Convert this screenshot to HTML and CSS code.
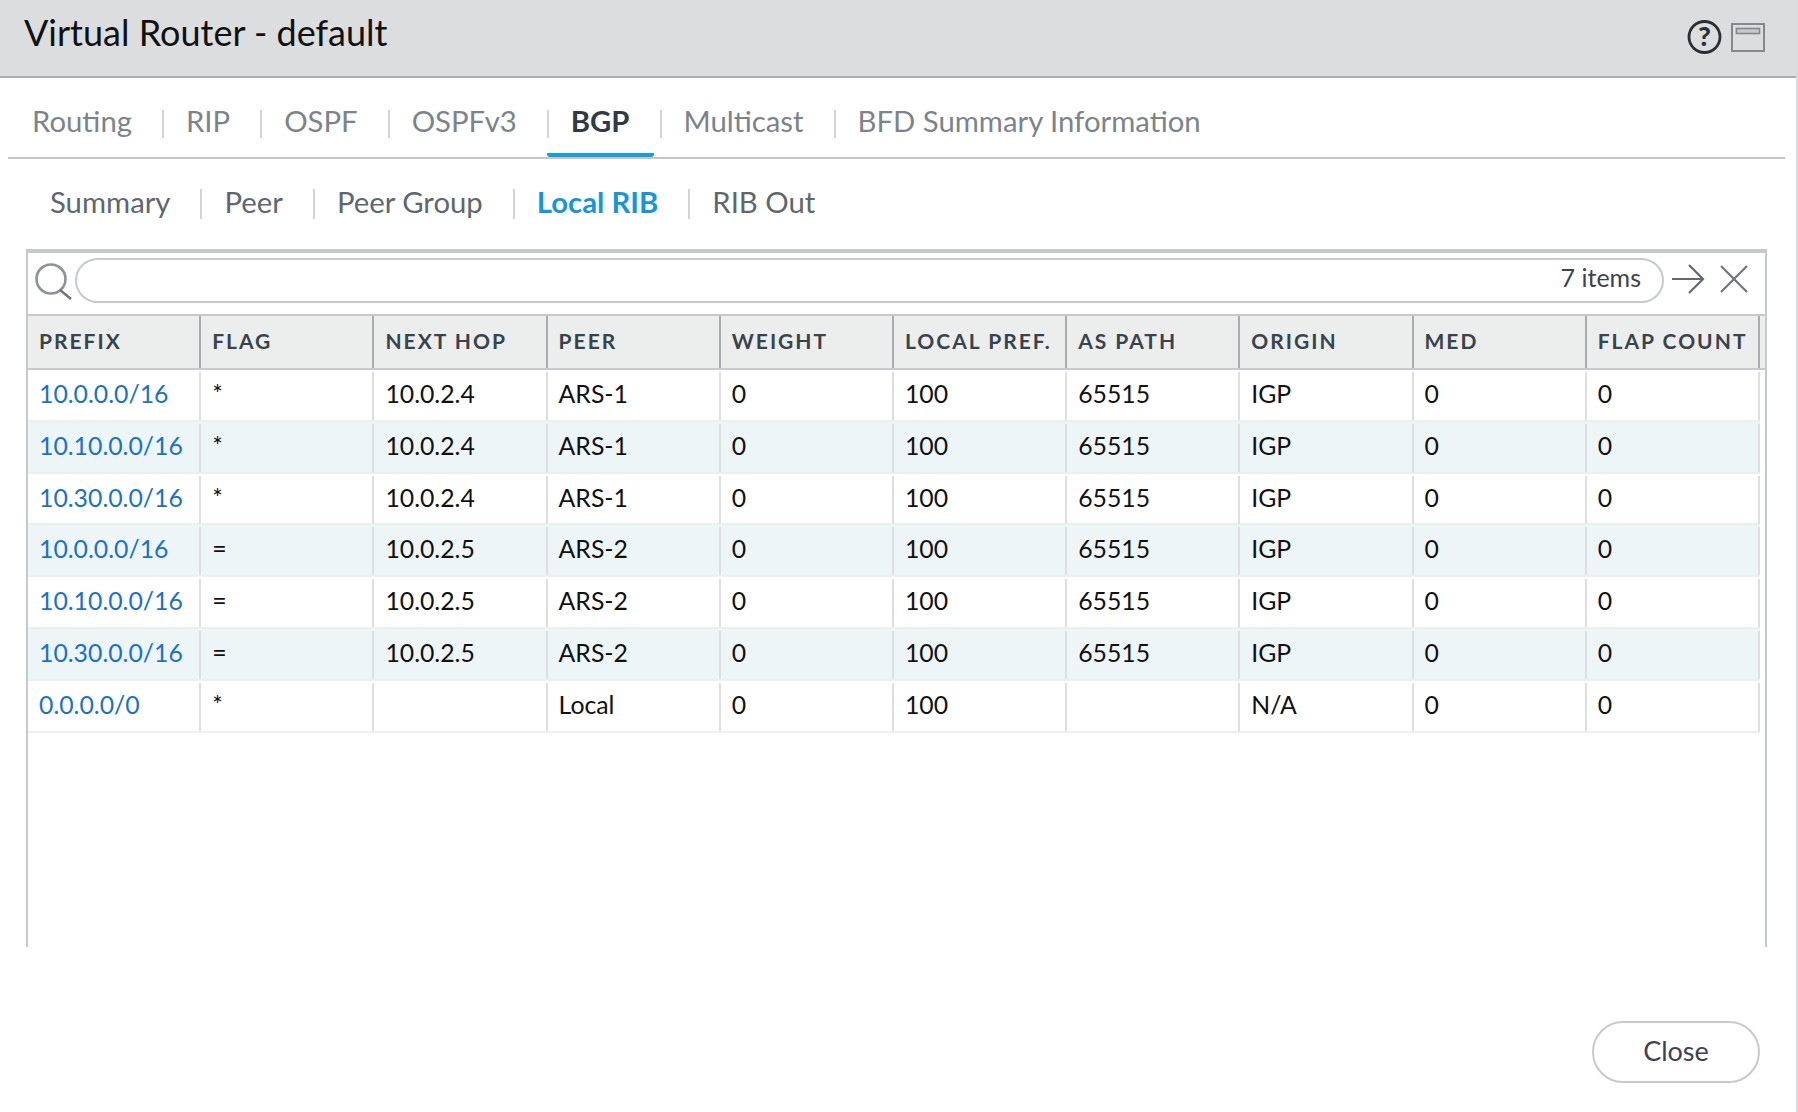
FILE: index.html
```html
<!DOCTYPE html>
<html>
<head>
    <meta charset="utf-8" />
    <title>Virtual Router - default</title>
    <link rel="stylesheet" href="styles.css">
</head>
<body>
    <div class="dialog">
        <div class="titlebar">
            <h1>Virtual Router - default</h1>
            <div class="title-icons">
                <svg width="35" height="34" viewBox="0 0 35 34">
                    <circle cx="17.500" cy="17" r="15.500" fill="#dcdddf" stroke="#2b2f33" stroke-width="2.800"/>
                    <text x="17.500" y="26" text-anchor="middle" class="help-mark">?</text>
                </svg>
                <svg width="34" height="29" viewBox="0 0 34 29">
                    <rect x="1" y="1" width="32" height="27" fill="none" stroke="#85898d" stroke-width="2"/>
                    <rect x="5.500" y="5.500" width="23" height="5" fill="#c6c9cc" stroke="#85898d" stroke-width="1.600"/>
                </svg>
            </div>
        </div>

        <div class="tabs">
            <a>Routing</a><a>RIP</a><a>OSPF</a><a>OSPFv3</a><a class="active">BGP</a><a>Multicast</a><a>BFD Summary Information</a>
        </div>

        <div class="subtabs">
            <a>Summary</a><a>Peer</a><a>Peer Group</a><a class="active">Local RIB</a><a>RIB Out</a>
        </div>

        <div class="grid-box">
            <div class="searchbar">
                <svg class="search-icon" width="37" height="37" viewBox="0 0 37 37">
                    <circle cx="16" cy="16" r="14.500" fill="none" stroke="#8d9296" stroke-width="2.600"/>
                    <path d="M25 27 L36 36" stroke="#6f7478" stroke-width="2.400" fill="none"/>
                </svg>
                <div class="search-input"><span>7 items</span></div>
                <svg class="arrow-icon" width="33" height="30" viewBox="0 0 33 30">
                    <path d="M0 15 H31 M17 1 L31 15 L17 29" stroke="#63686c" stroke-width="2.200" fill="none"/>
                </svg>
                <svg class="clear-icon" width="30" height="30" viewBox="0 0 30 30">
                    <path d="M2 2 L28 28 M28 2 L2 28" stroke="#707579" stroke-width="2.200" fill="none"/>
                </svg>
            </div>

            <div class="row head">
                <div>Prefix</div><div>Flag</div><div>Next Hop</div><div>Peer</div><div>Weight</div><div>Local Pref.</div><div>AS Path</div><div>Origin</div><div>MED</div><div>Flap Count</div>
            </div>
            <div id="rows"></div>
        </div>

        <div class="footer">
            <button class="close">Close</button>
        </div>
    </div>

    <script>
        var data = [
            ["10.0.0.0/16", "*", "10.0.2.4", "ARS-1", "0", "100", "65515", "IGP", "0", "0"],
            ["10.10.0.0/16", "*", "10.0.2.4", "ARS-1", "0", "100", "65515", "IGP", "0", "0"],
            ["10.30.0.0/16", "*", "10.0.2.4", "ARS-1", "0", "100", "65515", "IGP", "0", "0"],
            ["10.0.0.0/16", "=", "10.0.2.5", "ARS-2", "0", "100", "65515", "IGP", "0", "0"],
            ["10.10.0.0/16", "=", "10.0.2.5", "ARS-2", "0", "100", "65515", "IGP", "0", "0"],
            ["10.30.0.0/16", "=", "10.0.2.5", "ARS-2", "0", "100", "65515", "IGP", "0", "0"],
            ["0.0.0.0/0", "*", "", "Local", "0", "100", "", "N/A", "0", "0"]
        ];
        var html = "";
        for (var i = 0; i < data.length; i++) {
            html += '<div class="row' + (i % 2 ? ' odd' : '') + '">';
            for (var j = 0; j < data[i].length; j++) {
                html += '<div' + (j == 0 ? ' class="link"' : '') + '>' + data[i][j] + '</div>';
            }
            html += '</div>';
        }
        document.getElementById("rows").innerHTML = html;
    </script>
</body>
</html>
```

FILE: styles.css
```css
* {
    box-sizing: border-box;
}

html, body {
    margin: 0;
    padding: 0;
    height: 100%;
    background-color: #fff;
    font-family: 'Lato', sans-serif;
}

.dialog {
    height: 1112px;
    border-right: 2px solid #d9dcde;
    overflow: hidden;
    position: relative;
}

/* little blue mark on the window edge */
.dialog::after {
    content: "";
    position: absolute;
    right: -2px;
    top: 76px;
    width: 2px;
    height: 26px;
    background-color: #7fb2d0;
}

.titlebar {
    height: 78px;
    background-color: #dcdddf;
    border-bottom: 2px solid #a9aeb2;
    padding: 0 31px 0 24px;
    display: flex;
    justify-content: space-between;
    align-items: flex-start;
}

.titlebar h1 {
    margin: 10px 0 0;
    font-size: 36px;
    line-height: 44px;
    font-weight: 400;
    color: #111;
}

.title-icons {
    display: flex;
    align-items: center;
    gap: 9px;
    margin-top: 20px;
}

.help-mark {
    font-family: 'Lato', sans-serif;
    font-size: 27px;
    font-weight: 900;
    fill: #2b2f33;
}

.tabs {
    margin: 0 11px 0 8px;
    height: 81px;
    border-bottom: 2px solid #c4c6c8;
    padding-top: 28px;
    display: flex;
    align-items: flex-start;
}

.tabs a {
    height: 51px;
    line-height: 30px;
    font-size: 29.300px;
    color: #7c848a;
    padding: 0 24px;
    margin-right: 6px;
    position: relative;
}

.tabs a + a::before,
.subtabs a + a::before {
    content: "";
    position: absolute;
    left: 0;
    top: 4px;
    width: 2px;
    height: 28px;
    background-color: #d2d4d6;
}

.tabs a.active {
    font-weight: 700;
    color: #2f3a45;
    border-bottom: 4px solid #12a0e0;
    border-radius: 0 0 3px 3px;
}

.subtabs {
    padding: 28px 0 0 26px;
    height: 90px;
    display: flex;
    align-items: flex-start;
}

.subtabs a {
    line-height: 30px;
    font-size: 29.300px;
    color: #5f676e;
    padding: 0 24px;
    margin-right: 6px;
    position: relative;
}

.subtabs a + a::before {
    top: 2px;
    height: 30px;
}

.subtabs a.active {
    font-weight: 700;
    color: #1496d8;
}

.grid-box {
    margin-left: 26px;
    width: 1741px;
    height: 698px;
    border: 2px solid #c6cacd;
    border-top-width: 4px;
    border-bottom: none;
}

.searchbar {
    height: 63px;
    border-bottom: 2px solid #c6cacd;
    display: flex;
    align-items: center;
    padding: 0 0 7px 7px;
}

.search-icon {
    flex: none;
    margin-top: 2px;
}

.search-input {
    flex: none;
    width: 1589px;
    height: 45px;
    margin-left: 3px;
    border: 2px solid #c6cacd;
    border-radius: 23px;
    text-align: right;
    padding-right: 21px;
    font-size: 25px;
    line-height: 34px;
    color: #3b444c;
}

.arrow-icon {
    margin: 0 0 3px 8px;
    flex: none;
}

.clear-icon {
    margin: 0 0 3px 14px;
    flex: none;
}

.row {
    display: grid;
    grid-template-columns: repeat(10, 173.200px);
    height: 51.800px;
    width: 1732px;
    border-bottom: 2px solid #eef0f0;
    font-size: 24.800px;
    color: #111;
}

.row > div {
    border-right: 2px solid #dddfe0;
    padding: 2px 0 0 11px;
    margin-top: 2px;
    line-height: 40px;
    height: 48px;
}

.row.odd {
    background-color: #edf5f7;
}

.row .link {
    color: #1a72c8;
}

.row.head {
    height: 54px;
    background-color: #eceeee;
    border-bottom: 2px solid #c6cacd;
    font-size: 21px;
    font-weight: 700;
    letter-spacing: 2px;
    text-transform: uppercase;
    color: #39434c;
    width: 1737px;
    grid-template-columns: repeat(10, 173.200px) 1fr;
}

.row.head > div {
    margin-top: 0;
    height: 52px;
    border-right-color: #a9adb0;
    line-height: 50px;
    padding-top: 0;
}

.footer {
    display: flex;
    justify-content: flex-end;
    padding: 74px 36px 0 0;
}

.close {
    width: 168px;
    height: 62px;
    border: 2px solid #c6cacd;
    border-radius: 31px;
    background-color: #fff;
    font-family: 'Lato', sans-serif;
    font-size: 27px;
    color: #3b444c;
    padding: 0 0 3px;
}
```
